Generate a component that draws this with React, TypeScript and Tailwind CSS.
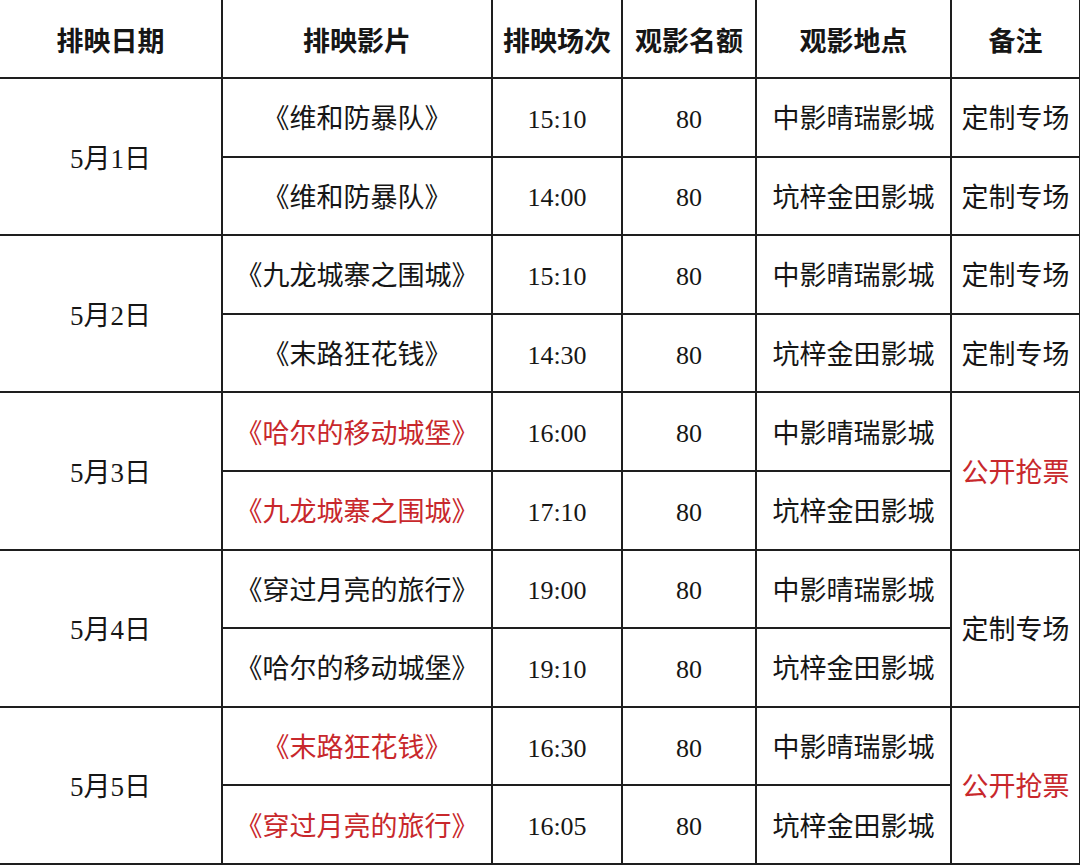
const RED = "text-[#c8282c]";

type Row = {
  date?: { label: string; span: number };
  film: string;
  time: string;
  seats: string;
  place: string;
  note?: { label: string; span: number; red?: boolean };
  red?: boolean;
};

const rows: Row[] = [
  { date: { label: "5月1日", span: 2 }, film: "《维和防暴队》", time: "15:10", seats: "80", place: "中影晴瑞影城", note: { label: "定制专场", span: 1 } },
  { film: "《维和防暴队》", time: "14:00", seats: "80", place: "坑梓金田影城", note: { label: "定制专场", span: 1 } },
  { date: { label: "5月2日", span: 2 }, film: "《九龙城寨之围城》", time: "15:10", seats: "80", place: "中影晴瑞影城", note: { label: "定制专场", span: 1 } },
  { film: "《末路狂花钱》", time: "14:30", seats: "80", place: "坑梓金田影城", note: { label: "定制专场", span: 1 } },
  { date: { label: "5月3日", span: 2 }, film: "《哈尔的移动城堡》", time: "16:00", seats: "80", place: "中影晴瑞影城", note: { label: "公开抢票", span: 2, red: true }, red: true },
  { film: "《九龙城寨之围城》", time: "17:10", seats: "80", place: "坑梓金田影城", red: true },
  { date: { label: "5月4日", span: 2 }, film: "《穿过月亮的旅行》", time: "19:00", seats: "80", place: "中影晴瑞影城", note: { label: "定制专场", span: 2 } },
  { film: "《哈尔的移动城堡》", time: "19:10", seats: "80", place: "坑梓金田影城" },
  { date: { label: "5月5日", span: 2 }, film: "《末路狂花钱》", time: "16:30", seats: "80", place: "中影晴瑞影城", note: { label: "公开抢票", span: 2, red: true }, red: true },
  { film: "《穿过月亮的旅行》", time: "16:05", seats: "80", place: "坑梓金田影城", red: true },
];

const cell = "border-b-2 border-r-2 border-[#1e1e1e] text-center align-middle px-0 pb-0 pt-[5px]";

export default function App() {
  return (
    <div
      className="w-[1080px] h-[866px] bg-white overflow-hidden text-[#161616]"
      style={{ fontFamily: '"Liberation Serif", "Noto Sans CJK SC", serif' }}
    >
      <table className="w-[1080px] border-collapse table-fixed text-[27px] leading-none">
        <colgroup>
          <col className="w-[222px]" />
          <col className="w-[270px]" />
          <col className="w-[130px]" />
          <col className="w-[134px]" />
          <col className="w-[195px]" />
          <col className="w-[129px]" />
        </colgroup>
        <thead>
          <tr className="h-[78px] font-bold">
            <th className={`${cell} pt-[8px]`}>排映日期</th>
            <th className={`${cell} pt-[8px]`}>排映影片</th>
            <th className={`${cell} pt-[8px]`}>排映场次</th>
            <th className={`${cell} pt-[8px]`}>观影名额</th>
            <th className={`${cell} pt-[8px]`}>观影地点</th>
            <th className={`${cell} pt-[8px]`}>备注</th>
          </tr>
        </thead>
        <tbody>
          {rows.map((r, i) => (
            <tr key={i} className="h-[78.6px]">
              {r.date && (
                <td rowSpan={r.date.span} className={cell}>
                  {r.date.label}
                </td>
              )}
              <td className={`${cell} ${r.red ? RED : ""}`}>{r.film}</td>
              <td className={`${cell} text-[26px]`}>{r.time}</td>
              <td className={`${cell} text-[26px]`}>{r.seats}</td>
              <td className={cell}>{r.place}</td>
              {r.note && (
                <td rowSpan={r.note.span} className={`${cell} ${r.note.red ? RED : ""}`}>
                  {r.note.label}
                </td>
              )}
            </tr>
          ))}
        </tbody>
      </table>
    </div>
  );
}
